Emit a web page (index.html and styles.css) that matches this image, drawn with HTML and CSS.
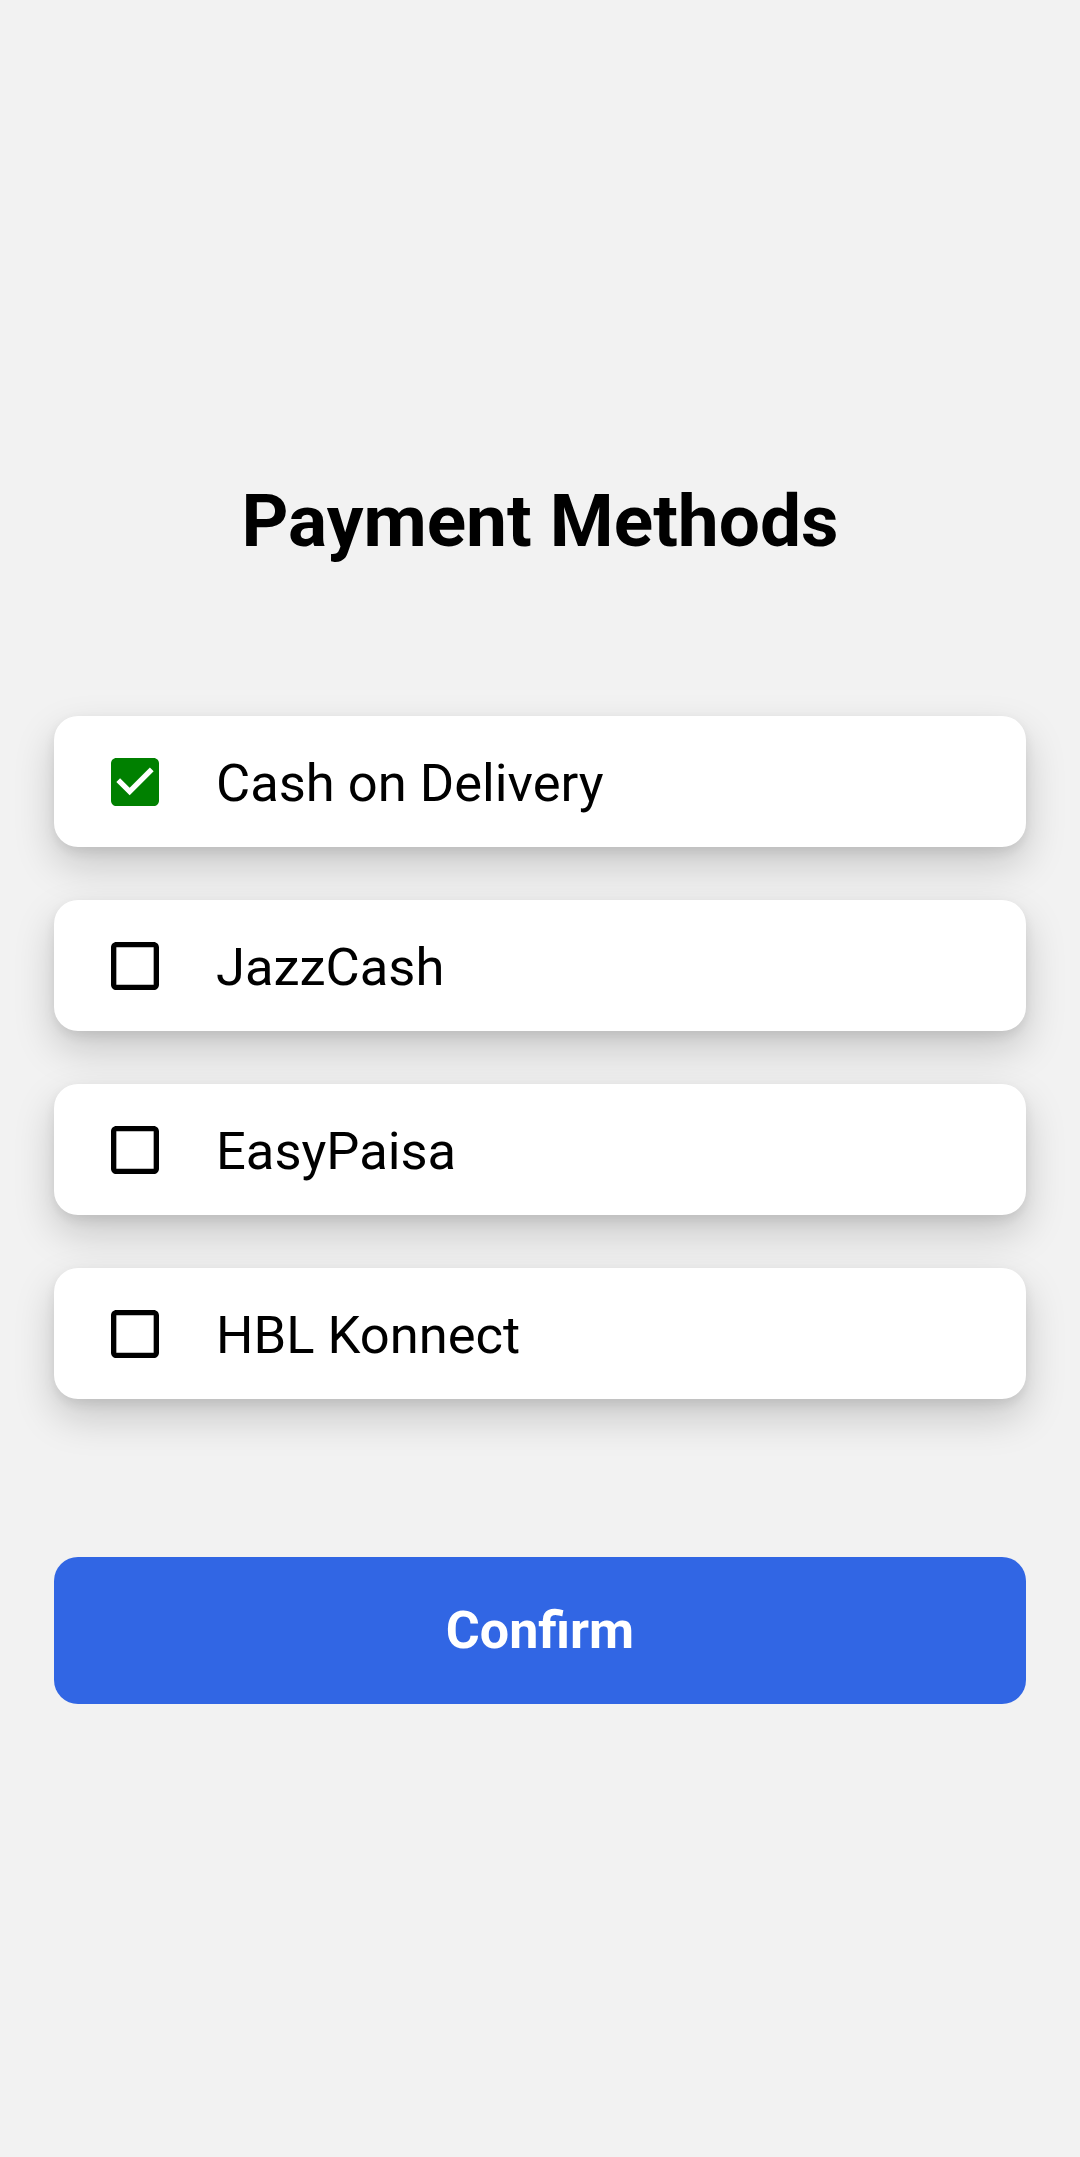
FILE: index.html
```html
<!DOCTYPE html>
<html lang="en">
<head>
<meta charset="utf-8">
<title>Payment Methods</title>
<link rel="stylesheet" href="styles.css">
</head>
<body>
<main class="screen">
  <h1 class="title">Payment Methods</h1>
  <ul class="methods">
    <li class="method">
      <svg class="box" viewBox="3 3 18 18" width="48" height="48"><path fill="#008000" d="M19 3H5c-1.11 0-2 .9-2 2v14c0 1.1.89 2 2 2h14c1.11 0 2-.9 2-2V5c0-1.1-.89-2-2-2z"/><path fill="#fff" d="M10 17l-5-5 1.41-1.41L10 14.17l7.59-7.59L19 8l-9 9z"/></svg>
      <span class="label">Cash on Delivery</span>
    </li>
    <li class="method">
      <svg class="box" viewBox="3 3 18 18" width="48" height="48"><path fill="#000" d="M19 5v14H5V5h14m0-2H5c-1.1 0-2 .9-2 2v14c0 1.1.9 2 2 2h14c1.1 0 2-.9 2-2V5c0-1.1-.9-2-2-2z"/></svg>
      <span class="label">JazzCash</span>
    </li>
    <li class="method">
      <svg class="box" viewBox="3 3 18 18" width="48" height="48"><path fill="#000" d="M19 5v14H5V5h14m0-2H5c-1.1 0-2 .9-2 2v14c0 1.1.9 2 2 2h14c1.1 0 2-.9 2-2V5c0-1.1-.9-2-2-2z"/></svg>
      <span class="label">EasyPaisa</span>
    </li>
    <li class="method">
      <svg class="box" viewBox="3 3 18 18" width="48" height="48"><path fill="#000" d="M19 5v14H5V5h14m0-2H5c-1.1 0-2 .9-2 2v14c0 1.1.9 2 2 2h14c1.1 0 2-.9 2-2V5c0-1.1-.9-2-2-2z"/></svg>
      <span class="label">HBL Konnect</span>
    </li>
  </ul>
  <button class="confirm" type="button">Confirm</button>
</main>
</body>
</html>
```
FILE: styles.css
```css
html, body {
  margin: 0;
  padding: 0;
  background: #f2f2f2;
}
body {
  font-family: Roboto, "Noto Sans", sans-serif;
  color: #000;
  min-height: 2157px;
}
.screen {
  display: flex;
  flex-direction: column;
  padding: 476px 54px 0;
}
.title {
  margin: 0;
  font-size: 73px;
  font-weight: 700;
  line-height: 90px;
  text-align: center;
}
.methods {
  list-style: none;
  margin: 150px 0 0;
  padding: 0;
  display: flex;
  flex-direction: column;
  gap: 53px;
}
.method {
  height: 131px;
  background: #fff;
  border-radius: 24px;
  display: flex;
  align-items: center;
  padding-left: 57px;
  box-shadow: 0 18px 40px rgba(0, 0, 0, 0.18), 0 5px 12px rgba(0, 0, 0, 0.08);
}
.box {
  flex: none;
  display: block;
}
.label {
  margin: 3px 0 0 57px;
  font-size: 52.5px;
  font-weight: 400;
}
.confirm {
  margin-top: 158px;
  height: 147px;
  border: none;
  border-radius: 24px;
  background: #3166e4;
  color: #fff;
  font-family: Roboto, "Noto Sans", sans-serif;
  font-size: 52px;
  font-weight: 700;
  padding: 0;
}
```
